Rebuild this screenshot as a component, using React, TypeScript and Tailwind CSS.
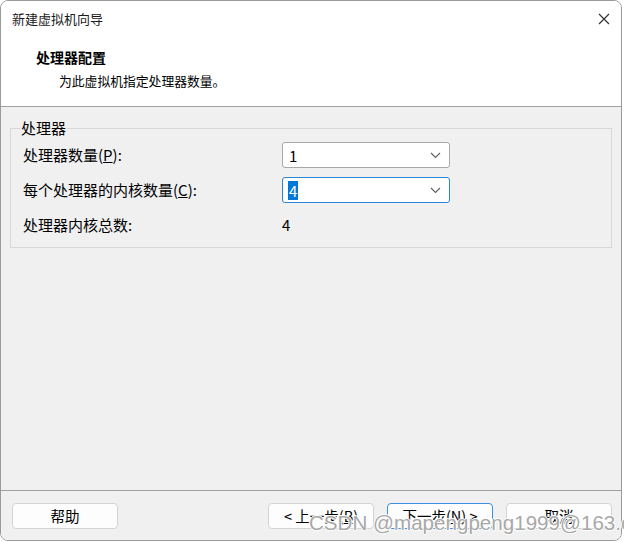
import React from "react";

const cjk = { fontFamily: '"Noto Sans CJK SC", "Noto Sans", sans-serif' };

function Chevron() {
  return (
    <svg width="11" height="7" viewBox="0 0 11 7" className="text-[#606060]">
      <path d="M1 1l4.5 4.5L10 1" fill="none" stroke="currentColor" strokeWidth="1.1" />
    </svg>
  );
}

function Combo({ value, focused }: { value: string; focused?: boolean }) {
  return (
    <div
      className={`w-[168px] h-[26px] bg-white rounded-[3px] flex items-center justify-between pl-[5px] pr-[8px] border ${
        focused ? "border-[#2b86d8]" : "border-[#a8a8a8]"
      }`}
    >
      <span
        className={`text-[15px] leading-[19px] px-[1px] ${
          focused ? "bg-[#0078d7] text-white" : "text-black"
        }`}
      >
        {value}
      </span>
      <Chevron />
    </div>
  );
}

function Button({ children, primary }: { children: React.ReactNode; primary?: boolean }) {
  return (
    <button
      className={`w-[106px] h-[26px] rounded-[4px] bg-[#fdfdfd] text-[14.5px] text-black flex items-center justify-center border ${
        primary ? "border-[#3d8ee0]" : "border-[#d3d3d3]"
      }`}
    >
      {children}
    </button>
  );
}

export default function App() {
  return (
    <div className="w-[624px] h-[542px] bg-white relative overflow-hidden" style={cjk}>
      <div className="w-[622px] h-[541px] rounded-[8px] border border-[#9a9a9a] overflow-hidden flex flex-col bg-white">
        {/* Header */}
        <div className="h-[106px] bg-white border-b border-[#a0a0a0] shrink-0">
          <div className="h-[36px] flex items-center justify-between pl-[11px] pr-[11px]">
            <span className="text-[13px] text-[#1a1a1a]">新建虚拟机向导</span>
            <svg width="12" height="12" viewBox="0 0 12 12" className="text-[#333]">
              <path d="M1 1l10 10M11 1L1 11" stroke="currentColor" strokeWidth="1.2" />
            </svg>
          </div>
          <div className="pl-[35px] pt-[10px] text-[14px] font-bold leading-[20px] text-black">处理器配置</div>
          <div className="pl-[58px] pt-[4px] text-[12.8px] leading-[20px] text-black">为此虚拟机指定处理器数量。</div>
        </div>

        {/* Body */}
        <div className="flex-1 bg-[#f0f0f0] px-[9px] pt-[11px]">
          <fieldset className="border border-[#d8d8d8] h-[130px] px-[12px]">
            <legend className="-ml-[3px] px-[1px] text-[15px] leading-[20px] text-black">处理器</legend>
            <div className="grid grid-cols-[259px_168px] gap-y-[9px] pt-[4px] text-[15px] text-black">
              <div className="h-[26px] flex items-center">处理器数量(<span className="underline">P</span>):</div>
              <Combo value="1" />
              <div className="h-[26px] flex items-center">每个处理器的内核数量(<span className="underline">C</span>):</div>
              <Combo value="4" focused />
              <div className="h-[26px] flex items-center">处理器内核总数:</div>
              <div className="h-[26px] flex items-center">4</div>
            </div>
          </fieldset>
        </div>

        {/* Footer */}
        <div className="h-[50px] shrink-0 bg-[#f0f0f0] border-t border-[#a0a0a0] flex items-start pt-[12px] pl-[11px] pr-[9px]">
          <Button>帮助</Button>
          <div className="flex-1" />
          <div className="flex gap-[13px]">
            <Button>&lt; 上一步(<span className="underline">B</span>)</Button>
            <Button primary>下一步(<span className="underline">N</span>) &gt;</Button>
            <Button>取消</Button>
          </div>
        </div>
      </div>

      {/* Watermark */}
      <div
        className="absolute left-[309px] top-[510px] whitespace-nowrap text-[20.6px] leading-[26px] text-[#a8a8a8]"
        style={{
          fontFamily: '"Liberation Sans", Arial, sans-serif',
          textShadow: "1px 0 #fff, -1px 0 #fff, 0 1px #fff, 0 -1px #fff",
        }}
      >
        CSDN @mapengpeng1999@163.com
      </div>
    </div>
  );
}
